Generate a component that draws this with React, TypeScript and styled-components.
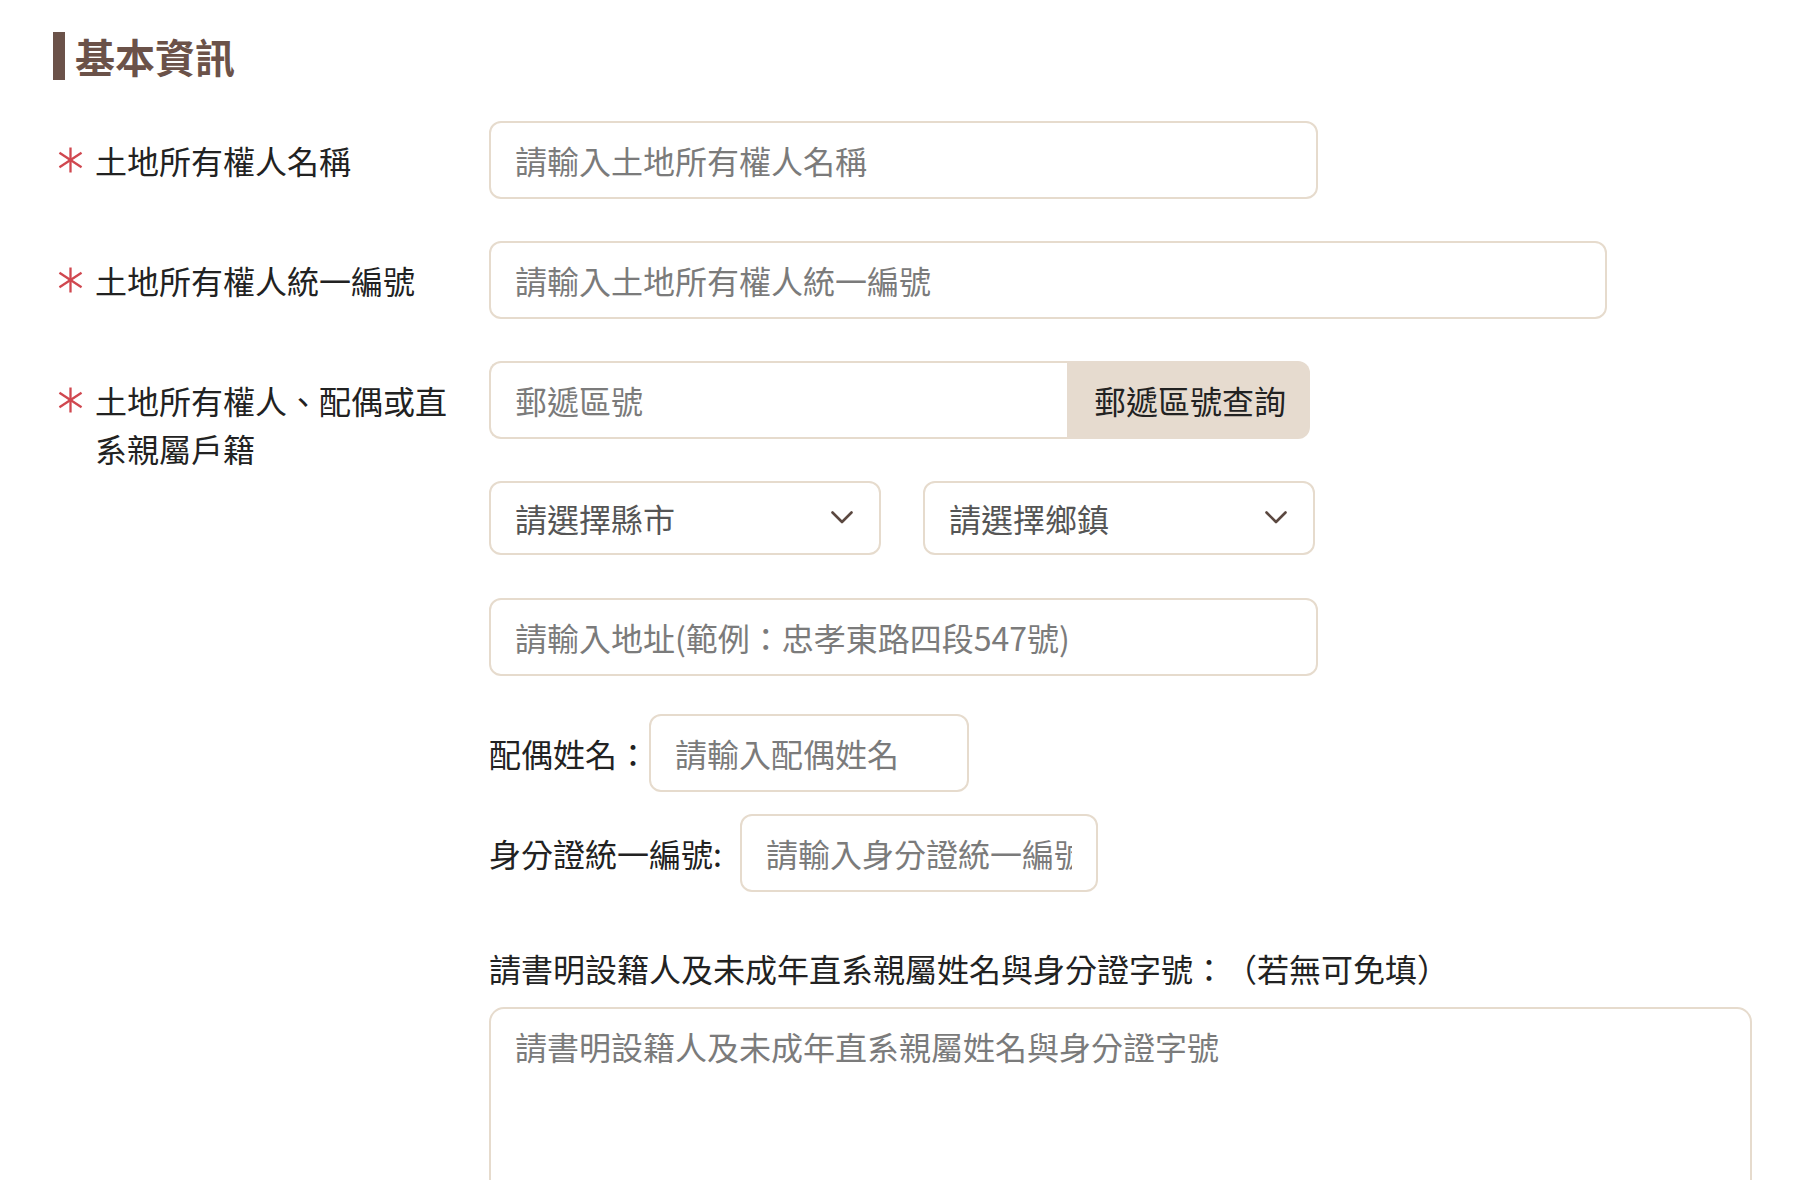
import type { FC, ReactNode } from 'react'
import styled, { createGlobalStyle } from 'styled-components'

const GlobalStyle = createGlobalStyle`
  html, body {
    margin: 0;
    padding: 0;
    background: #ffffff;
  }

  body {
    font-family: "Noto Sans CJK TC", "Noto Sans", sans-serif;
    color: #222222;
    text-spacing-trim: space-all;
  }

  * {
    box-sizing: border-box;
  }
`

const Page = styled.main`
  padding: 32px 0 0 53px;
`

const SectionHeading = styled.h2`
  align-items: center;
  color: #6b5249;
  display: flex;
  font-size: 40px;
  font-weight: 700;
  gap: 10px;
  height: 48px;
  line-height: 48px;
  margin: 0 0 41px;

  &::before {
    background: #6b5249;
    content: '';
    display: block;
    height: 48px;
    width: 12px;
  }
`

const Form = styled.form`
  display: grid;
  row-gap: 42px;
`

const Row = styled.div`
  display: grid;
  grid-template-columns: 436px 1fr;
`

const LabelCell = styled.div`
  display: flex;
  font-size: 32px;
  font-weight: 400;
  gap: 12px;
  line-height: 48px;
  padding-top: 15px;
`

const Star = styled.span`
  align-items: center;
  display: flex;
  flex: none;
  height: 48px;
  justify-content: center;
  padding-left: 5px;
  width: 30px;
`

const LabelText = styled.label`
  width: 360px;
`

const Fields = styled.div`
  display: grid;
  justify-items: start;
  row-gap: 42px;
`

const TextInput = styled.input<{ $width: number }>`
  background: #ffffff;
  border: 2px solid #e6dbcd;
  border-radius: 12px;
  color: #222222;
  font-family: inherit;
  font-size: 32px;
  height: 78px;
  outline: none;
  padding: 0 24px;
  width: ${({ $width }) => $width}px;

  &::placeholder {
    color: #7b7b7b;
  }
`

const PostalGroup = styled.div`
  display: flex;
`

const PostalInput = styled(TextInput)`
  border-bottom-right-radius: 0;
  border-right: none;
  border-top-right-radius: 0;
`

const PostalButton = styled.button`
  background: #e6dbcf;
  border: none;
  border-radius: 0 12px 12px 0;
  color: #222222;
  font-family: inherit;
  font-size: 32px;
  font-weight: 400;
  height: 78px;
  padding: 0 24px 0 27px;
  width: 243px;
`

const SelectRow = styled.div`
  display: flex;
  gap: 42px;
  margin-block: 0 1px;
`

const SelectWrap = styled.div`
  position: relative;
  width: 392px;

  svg {
    pointer-events: none;
    position: absolute;
    right: 28px;
    top: 30px;
  }
`

const Select = styled.select`
  appearance: none;
  background: #ffffff;
  border: 2px solid #e6dbcd;
  border-radius: 12px;
  color: #555555;
  font-family: inherit;
  font-size: 32px;
  font-weight: 400;
  height: 74px;
  outline: none;
  padding: 0 24px;
  width: 100%;
`

const InlineField = styled.div<{ $gap: number }>`
  align-items: center;
  display: flex;
  gap: ${({ $gap }) => $gap}px;
`

const InlineLabel = styled.label`
  font-size: 32px;
  font-weight: 400;
  line-height: 48px;
`

const Stack = styled.div`
  display: grid;
  justify-items: start;
  margin-top: -4px;
  row-gap: 22px;
`

const NoteBlock = styled.div`
  display: grid;
  margin-top: 10px;
  row-gap: 15px;
`

const TextArea = styled.textarea`
  border: 2px solid #e6dbcd;
  border-radius: 15px;
  font-family: inherit;
  font-size: 32px;
  height: 260px;
  line-height: 48px;
  outline: none;
  padding: 13px 24px;
  resize: none;
  width: 1263px;

  &::placeholder {
    color: #7b7b7b;
  }
`

const Asterisk: FC = () => (
  <svg width="26" height="28" viewBox="0 0 26 28" fill="none">
    <g stroke="#d0474f" strokeWidth="2.4" strokeLinecap="butt">
      <line x1="13" y1="1" x2="13" y2="27" />
      <line x1="1.5" y1="6.5" x2="24.5" y2="21.5" />
      <line x1="24.5" y1="6.5" x2="1.5" y2="21.5" />
    </g>
  </svg>
)

const Chevron: FC = () => (
  <svg width="22" height="13" viewBox="0 0 22 13" fill="none">
    <path d="M1.5 1.5 L11 11 L20.5 1.5" stroke="#5b4840" strokeWidth="2.6" strokeLinecap="round" strokeLinejoin="round" />
  </svg>
)

const FormRow: FC<{ label: string; htmlFor: string; children: ReactNode }> = ({ label, htmlFor, children }) => (
  <Row>
    <LabelCell>
      <Star>
        <Asterisk />
      </Star>
      <LabelText htmlFor={htmlFor}>{label}</LabelText>
    </LabelCell>
    <Fields>{children}</Fields>
  </Row>
)

const App: FC = () => (
  <>
    <GlobalStyle />
    <Page>
      <SectionHeading>基本資訊</SectionHeading>
      <Form onSubmit={(e) => e.preventDefault()}>
        <FormRow label="土地所有權人名稱" htmlFor="owner-name">
          <TextInput id="owner-name" $width={829} placeholder="請輸入土地所有權人名稱" />
        </FormRow>
        <FormRow label="土地所有權人統一編號" htmlFor="owner-id">
          <TextInput id="owner-id" $width={1118} placeholder="請輸入土地所有權人統一編號" />
        </FormRow>
        <FormRow label="土地所有權人、配偶或直系親屬戶籍" htmlFor="postal-code">
          <PostalGroup>
            <PostalInput id="postal-code" $width={578} placeholder="郵遞區號" />
            <PostalButton type="button">郵遞區號查詢</PostalButton>
          </PostalGroup>
          <SelectRow>
            <SelectWrap>
              <Select defaultValue="">
                <option value="">請選擇縣市</option>
              </Select>
              <Chevron />
            </SelectWrap>
            <SelectWrap>
              <Select defaultValue="">
                <option value="">請選擇鄉鎮</option>
              </Select>
              <Chevron />
            </SelectWrap>
          </SelectRow>
          <TextInput $width={829} placeholder="請輸入地址(範例：忠孝東路四段547號)" />
          <Stack>
            <InlineField $gap={0}>
              <InlineLabel htmlFor="spouse-name">配偶姓名：</InlineLabel>
              <TextInput id="spouse-name" $width={320} placeholder="請輸入配偶姓名" />
            </InlineField>
            <InlineField $gap={18}>
              <InlineLabel htmlFor="spouse-id">身分證統一編號:</InlineLabel>
              <TextInput id="spouse-id" $width={358} placeholder="請輸入身分證統一編號" />
            </InlineField>
          </Stack>
          <NoteBlock>
            <InlineLabel htmlFor="household">請書明設籍人及未成年直系親屬姓名與身分證字號：（若無可免填）</InlineLabel>
            <TextArea id="household" placeholder="請書明設籍人及未成年直系親屬姓名與身分證字號" />
          </NoteBlock>
        </FormRow>
      </Form>
    </Page>
  </>
)

export default App
